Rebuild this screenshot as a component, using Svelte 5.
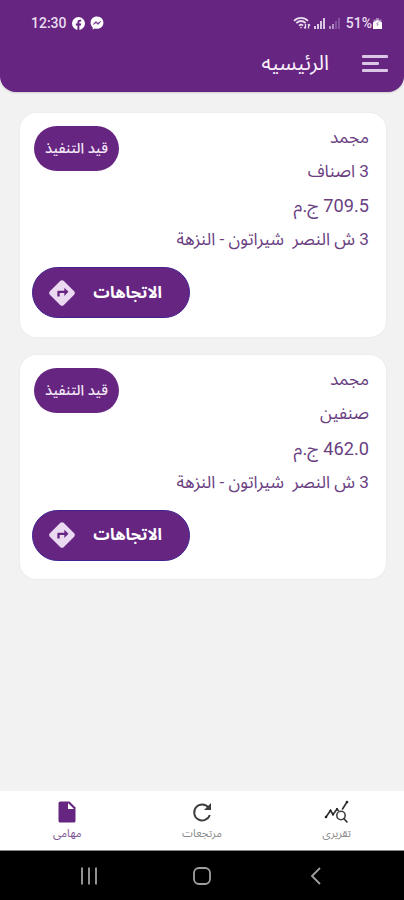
<script lang="ts">
	type Order = {
		id: number;
		customer: string;
		items: string;
		price: string;
		address: string;
		status: string;
	};

	let orders: Order[] = $state([
		{
			id: 1,
			customer: 'مجمد',
			items: '3 اصناف',
			price: '709.5',
			address: '3 ش النصر  شيراتون - النزهة',
			status: 'قيد التنفيذ'
		},
		{
			id: 2,
			customer: 'مجمد',
			items: 'صنفين',
			price: '462.0',
			address: '3 ش النصر  شيراتون - النزهة',
			status: 'قيد التنفيذ'
		}
	]);

	const tabs = [
		{ id: 'reports', label: 'تقريرى' },
		{ id: 'returns', label: 'مرتجعات' },
		{ id: 'tasks', label: 'مهامى' }
	];

	let activeTab = $state('tasks');
</script>

<div class="screen" dir="rtl">
	<header>
		<div class="status-bar" dir="ltr">
			<div class="status-left">
				<span class="time">12:30</span>
				<svg width="13" height="13" viewBox="0 0 24 24">
					<circle cx="12" cy="12" r="12" fill="#fff" />
					<path d="M10 24v-8.500H7V12h3V9.500C10 6.500 11.800 5 14.500 5l2.500.2v3h-1.500c-1.500 0-1.900.8-1.900 1.800v2H17l-.6 3.500h-2.800V24z" fill="#672582" />
				</svg>
				<svg width="14" height="14" viewBox="0 0 24 24">
					<path d="M12 1C5.500 1 1 5.700 1 11.500c0 3.200 1.400 6 3.600 7.900V23l3.600-1.700c1.200.4 2.500.6 3.800.6 6.500 0 11-4.700 11-10.400S18.500 1 12 1z" fill="#fff" />
					<path d="M5.500 14.500l4.500-5 3.500 3 5-3.500-4.500 5.500-3.500-3z" fill="#672582" stroke="#672582" />
				</svg>
			</div>
			<div class="status-right">
				<svg width="18" height="14" viewBox="0 0 18 14" fill="none" stroke="#e9dcef" stroke-width="1.700">
					<path d="M1 4.800C5 .8 11 .8 15 4.800M3.300 7.200c3-2.800 6.400-2.800 9.400 0M6 9.600c1.500-1.200 2.800-1.200 4 0" />
					<path d="M8 12.300v-1.500M12.500 8v4.500M11 11l1.500 1.500M15.500 12.500V8M17 9.500L15.500 8" stroke-width="1.300" />
				</svg>
				<svg width="12" height="11" viewBox="0 0 12 11" fill="#d9c6e2">
					<path d="M0 8h2v3H0zM3 6h2v5H3zM6 3h2v8H6zM9 0h2v11H9z" />
				</svg>
				<svg width="12" height="11" viewBox="0 0 12 11" fill="#8552a0">
					<path d="M0 8h2v3H0zM3 6h2v5H3z" fill="#b391c4" />
					<path d="M6 3h2v8H6zM9 0h2v11H9z" />
				</svg>
				<span class="battery">51%</span>
				<svg width="9" height="11" viewBox="0 0 9 11">
					<path d="M3 0h3v1.500h2.500V11h-8V1.500H3z" fill="#a684b6" />
					<path d="M0 4.500l4.500-2.500L9 4.500V11H0z" fill="#fff" />
					<path d="M6 3.500L3.500 6h1.800L4 8" fill="none" stroke="#a684b6" stroke-width=".9" />
				</svg>
			</div>
		</div>
		<div class="app-bar">
			<button class="menu" aria-label="القائمة">
				<span></span>
				<span class="short"></span>
				<span></span>
			</button>
			<h1>الرئيسيه</h1>
		</div>
	</header>

	<main>
		{#each orders as order (order.id)}
			<article class="card">
				<div class="card-top">
					<div class="info">
						<p>{order.customer}</p>
						<p>{order.items}</p>
						<p class="price">{order.price} ج.م</p>
						<p>{order.address}</p>
					</div>
					<span class="badge">{order.status}</span>
				</div>
				<button class="btn-directions">
					<span>الاتجاهات</span>
					<svg width="28" height="28" viewBox="0 0 24 24" fill="#ead9f1">
						<path d="M22.430 10.590l-9.010-9.010c-.75-.75-2.070-.76-2.830 0l-9 9c-.78.78-.78 2.040 0 2.820l9 9c.39.390.9.590 1.410.590.510 0 1.020-.2 1.410-.580l8.990-8.990c.79-.760.8-2.020.030-2.830zM14 14.500V12h-4v3H8v-4c0-.55.45-1 1-1h5V7.500l3.500 3.500-3.500 3.500z" />
					</svg>
				</button>
			</article>
		{/each}
	</main>

	<nav class="tabs">
		{#each tabs as tab (tab.id)}
			<button class="tab" class:active={activeTab === tab.id} onclick={() => (activeTab = tab.id)}>
				{#if tab.id === 'reports'}
					<svg width="25" height="24" viewBox="0 0 25 24" fill="none" stroke="#2c2c2c" stroke-width="1.600" stroke-linecap="round">
						<path d="M2 17l4.500-6.500 2.500 4 4-5.500 1.200 1.500M18.500 9l4.500-7" />
						<circle cx="17" cy="15.500" r="4.200" stroke="#444" />
						<path d="M20 18.700l3 3.300" />
						<g fill="#222" stroke="none">
							<circle cx="2" cy="17" r="1.300" />
							<circle cx="6.500" cy="10.500" r="1.100" />
							<circle cx="9" cy="14.500" r="1.100" />
							<circle cx="13" cy="9" r="1.100" />
							<circle cx="23" cy="2" r="1.300" />
						</g>
					</svg>
				{:else if tab.id === 'returns'}
					<svg width="24" height="24" viewBox="0 0 24 24" fill="none" stroke="#3c3c3c" stroke-width="1.900">
						<path d="M18.500 7.500A8 8 0 1 0 19.800 15" />
						<path d="M21 3v7h-7z" fill="#3c3c3c" stroke="none" />
					</svg>
				{:else}
					<svg width="24" height="24" viewBox="0 0 24 24">
						<path d="M5.500 1.500h9l6 6v13.500c0 .8-.7 1.500-1.500 1.500H5c-.8 0-1.500-.7-1.500-1.500V3.500c0-1.100.9-2 2-2z" fill="#672582" />
						<path d="M13 3v6h6z" fill="#fff" />
					</svg>
				{/if}
				<span>{tab.label}</span>
			</button>
		{/each}
	</nav>

	<div class="system-nav" dir="ltr">
		<svg width="18" height="18" viewBox="0 0 18 18" stroke="#a0a0a0" stroke-width="1.800">
			<path d="M2 .5v17M9 .5v17M16 .5v17" />
		</svg>
		<svg width="18" height="18" viewBox="0 0 18 18" fill="none" stroke="#a0a0a0" stroke-width="1.800">
			<rect x="1" y="1" width="16" height="16" rx="5" />
		</svg>
		<svg width="18" height="18" viewBox="0 0 18 18" fill="none" stroke="#a0a0a0" stroke-width="1.800">
			<path d="M13 1L5 9l8 8" />
		</svg>
	</div>
</div>

<style>
	:global(body) {
		margin: 0;
		background: #f2f2f2;
	}

	.screen {
		display: flex;
		flex-direction: column;
		height: 900px;
		font-family: Roboto, 'Noto Sans Arabic', 'DejaVu Sans', sans-serif;
		background: #f2f2f2;
		overflow: hidden;
	}

	button {
		border: none;
		padding: 0;
		background: none;
		font-family: inherit;
		cursor: pointer;
	}

	header {
		box-sizing: border-box;
		height: 92px;
		background: #672582;
		border-radius: 0 0 16px 16px;
		box-shadow: 0 1px 2px rgba(0, 0, 0, 0.15);
	}

	.status-bar {
		display: flex;
		justify-content: space-between;
		align-items: center;
		height: 46px;
		padding: 0 22px 0 31px;
		color: #eadcf0;
		font-size: 14px;
		font-weight: 500;
	}

	.status-left,
	.status-right {
		display: flex;
		align-items: center;
		gap: 5px;
	}

	.status-right {
		gap: 3px;
	}

	.battery {
		margin-left: 2px;
		margin-right: -2px;
	}

	.app-bar {
		display: flex;
		align-items: center;
		height: 34px;
		padding: 0 16px;
	}

	.menu {
		display: flex;
		flex-direction: column;
		gap: 4px;
		width: 26px;
	}

	.menu span {
		width: 26px;
		height: 3px;
		border-radius: 1px;
		background: #dcc6e6;
	}

	.menu .short {
		width: 17px;
		align-self: flex-end;
	}

	h1 {
		margin: 0 33px 0 0;
		font-size: 21px;
		font-weight: 400;
		line-height: 32px;
		color: #f8f0fb;
	}

	main {
		flex: 1;
		display: flex;
		flex-direction: column;
		gap: 18.500px;
		padding: 20.500px 18px 0 20px;
	}

	.card {
		box-sizing: border-box;
		display: flex;
		flex-direction: column;
		justify-content: space-between;
		height: 224px;
		padding: 8px 17px 18.500px 12px;
		background: #fff;
		border-radius: 16px;
		box-shadow: 0 0 2px rgba(0, 0, 0, 0.08);
	}

	.card-top {
		display: flex;
		justify-content: space-between;
		align-items: flex-start;
	}

	.info p {
		margin: 0;
		height: 34.300px;
		font-size: 17.200px;
		line-height: 33px;
		color: #6a3f82;
		white-space: pre;
	}

	.info .price {
		font-size: 18.200px;
	}

	.badge {
		width: 85px;
		height: 45px;
		margin: 5px 0 0 2px;
		border-radius: 23px;
		background: #672582;
		color: #f3e9f7;
		font-size: 14.500px;
		font-weight: 500;
		line-height: 45px;
		text-align: center;
	}

	.btn-directions {
		box-sizing: border-box;
		display: flex;
		justify-content: space-between;
		align-items: center;
		align-self: flex-end;
		width: 158px;
		height: 51px;
		padding: 0 27px 0 15px;
		border: 1px solid #3f2290;
		border-radius: 26px;
		background: #672582;
		color: #fff;
		font-size: 16.300px;
		font-weight: 700;
	}

	.tabs {
		display: flex;
		height: 59px;
		background: #fff;
		border-bottom: 1px solid #888;
	}

	.tab {
		flex: 1;
		display: flex;
		flex-direction: column;
		align-items: center;
		gap: 1px;
		padding-top: 9px;
		font-size: 11px;
		line-height: 18px;
		color: #8a8a8a;
	}

	.tab.active {
		color: #7d5592;
	}

	.system-nav {
		display: flex;
		justify-content: center;
		align-items: center;
		gap: 95.500px;
		height: 49px;
		background: #000;
	}
</style>
